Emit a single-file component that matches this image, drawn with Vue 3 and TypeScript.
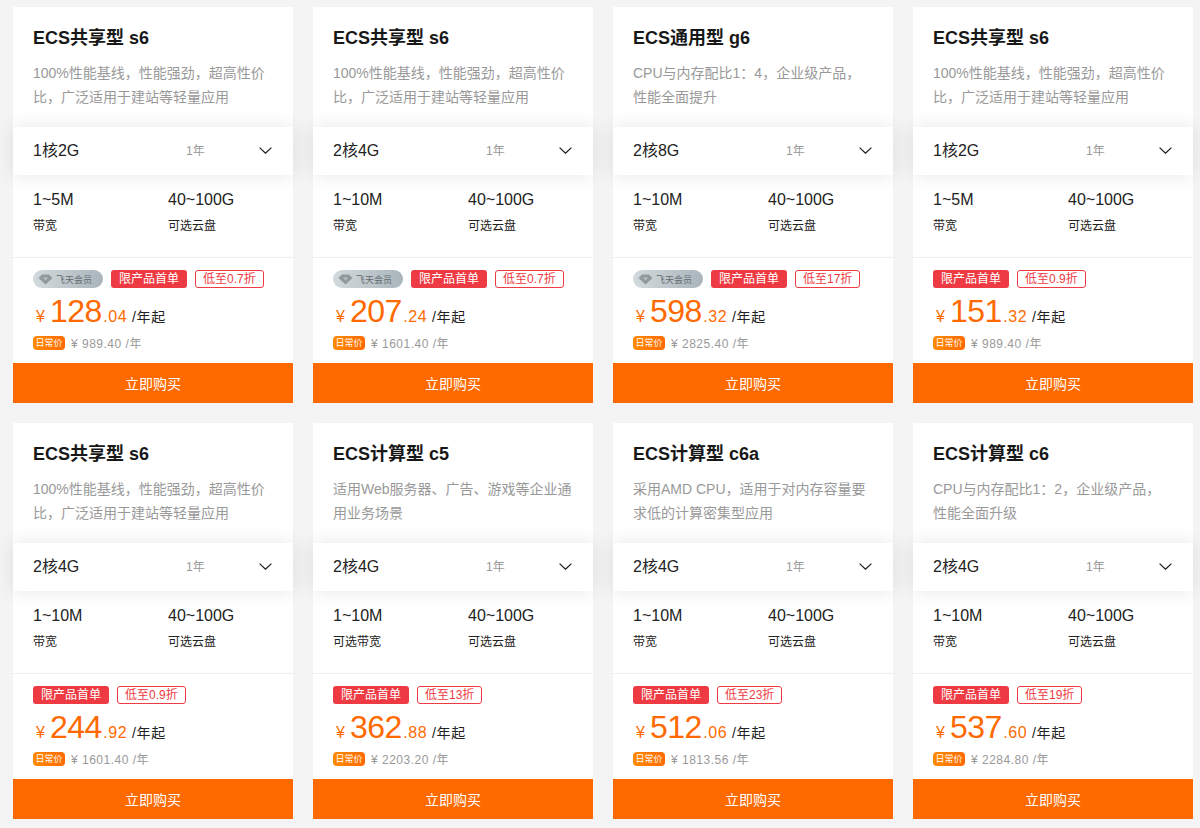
<script setup lang="ts">
interface Product {
  name: string;
  desc: string;
  spec: string;
  band: string;
  bandLabel: string;
  member: boolean;
  discount: string;
  price: string;
  cents: string;
  regular: string;
}

const s6Desc = '100%性能基线，性能强劲，超高性价比，广泛适用于建站等轻量应用';

const products: Product[] = [
  { name: 'ECS共享型 s6', desc: s6Desc, spec: '1核2G', band: '1~5M', bandLabel: '带宽', member: true, discount: '低至0.7折', price: '128', cents: '.04', regular: '989.40' },
  { name: 'ECS共享型 s6', desc: s6Desc, spec: '2核4G', band: '1~10M', bandLabel: '带宽', member: true, discount: '低至0.7折', price: '207', cents: '.24', regular: '1601.40' },
  { name: 'ECS通用型 g6', desc: 'CPU与内存配比1：4，企业级产品，\n性能全面提升', spec: '2核8G', band: '1~10M', bandLabel: '带宽', member: true, discount: '低至17折', price: '598', cents: '.32', regular: '2825.40' },
  { name: 'ECS共享型 s6', desc: s6Desc, spec: '1核2G', band: '1~5M', bandLabel: '带宽', member: false, discount: '低至0.9折', price: '151', cents: '.32', regular: '989.40' },
  { name: 'ECS共享型 s6', desc: s6Desc, spec: '2核4G', band: '1~10M', bandLabel: '带宽', member: false, discount: '低至0.9折', price: '244', cents: '.92', regular: '1601.40' },
  { name: 'ECS计算型 c5', desc: '适用Web服务器、广告、游戏等企业通用业务场景', spec: '2核4G', band: '1~10M', bandLabel: '可选带宽', member: false, discount: '低至13折', price: '362', cents: '.88', regular: '2203.20' },
  { name: 'ECS计算型 c6a', desc: '采用AMD CPU，适用于对内存容量要求低的计算密集型应用', spec: '2核4G', band: '1~10M', bandLabel: '带宽', member: false, discount: '低至23折', price: '512', cents: '.06', regular: '1813.56' },
  { name: 'ECS计算型 c6', desc: 'CPU与内存配比1：2，企业级产品，\n性能全面升级', spec: '2核4G', band: '1~10M', bandLabel: '带宽', member: false, discount: '低至19折', price: '537', cents: '.60', regular: '2284.80' }
];
</script>

<template>
  <div class="page">
    <div v-for="(item, i) in products" :key="i" class="card">
      <div class="intro">
        <h3 class="name">{{ item.name }}</h3>
        <p class="desc">{{ item.desc }}</p>
      </div>

      <div class="select">
        <span class="spec">{{ item.spec }}</span>
        <span class="term">1年</span>
        <svg class="arrow" width="13" height="7" viewBox="0 0 13 7">
          <path d="M.6.6l5.9 5.6L12.4.6" fill="none" stroke="#222" stroke-width="1.3" />
        </svg>
      </div>

      <div class="specs">
        <div class="spec-col band">
          <div class="spec-value">{{ item.band }}</div>
          <div class="spec-label">{{ item.bandLabel }}</div>
        </div>
        <div class="spec-col">
          <div class="spec-value">40~100G</div>
          <div class="spec-label">可选云盘</div>
        </div>
      </div>

      <div class="pricing">
        <div class="tags">
          <span v-if="item.member" class="tag-member">
            <svg width="15" height="11" viewBox="0 0 15 11">
              <path d="M4 .5h7L14.5 4 7.5 10.5.5 4z" fill="#8f9a9f" />
              <path d="M5 3.5h5L7.5 6.5z" fill="#b9c2c6" />
            </svg>
            <span>飞天会员</span>
          </span>
          <span class="tag-first">限产品首单</span>
          <span class="tag-discount">{{ item.discount }}</span>
        </div>
        <div class="price">
          <span class="yen">¥</span>
          <span class="amount">{{ item.price }}</span>
          <span class="cents">{{ item.cents }}</span>
          <span class="unit">/年起</span>
        </div>
        <div class="regular">
          <span class="tag-regular">日常价</span>
          <span class="regular-price">¥ {{ item.regular }} /年</span>
        </div>
      </div>

      <button type="button" class="buy">立即购买</button>
    </div>
  </div>
</template>

<style scoped>
.page {
  display: grid;
  grid-template-columns: repeat(4, 280px);
  gap: 20px;
  padding: 7px 7px 5px 13px;
  width: 1200px;
  box-sizing: border-box;
  font-family: "Liberation Sans", "Noto Sans CJK SC", sans-serif;
}

.card {
  display: flex;
  flex-direction: column;
  height: 396px;
  background: #fff;
}

.intro {
  height: 120px;
  padding: 20px 20px 0;
  box-sizing: border-box;
}

.name {
  margin: 0;
  font-size: 18px;
  line-height: 22px;
  font-weight: 700;
  color: #181818;
}

.desc {
  margin: 12px 0 0;
  font-size: 14px;
  line-height: 24px;
  color: #999;
  white-space: pre-line;
}

.select {
  display: flex;
  align-items: center;
  height: 48px;
  padding: 0 20px;
  background: #fff;
  box-shadow: 0 0 20px rgba(0, 0, 0, 0.1);
  position: relative;
}

.spec {
  width: 152px;
  font-size: 16px;
  line-height: 48px;
  height: 48px;
  color: #222;
}

.term {
  font-size: 12px;
  line-height: 48px;
  height: 48px;
  margin-left: 1px;
  color: #999;
}

.arrow {
  margin-left: auto;
  margin-right: 1px;
  margin-bottom: 2px;
}

.specs {
  display: flex;
  height: 83px;
  padding: 15px 20px 0;
  box-sizing: border-box;
  border-bottom: 1px solid #eee;
}

.spec-col {
  flex: 1;
}

.band {
  flex: 0 0 135px;
}

.spec-value {
  font-size: 16px;
  line-height: 20px;
  color: #222;
}

.spec-label {
  margin-top: 7px;
  font-size: 12px;
  line-height: 18px;
  color: #222;
}

.pricing {
  flex: 1;
  padding: 12px 20px 0;
}

.tags {
  display: flex;
  align-items: center;
  gap: 8px;
  height: 18px;
}

.tag-member {
  display: flex;
  align-items: center;
  gap: 3px;
  width: 70px;
  height: 18px;
  padding-left: 5px;
  box-sizing: border-box;
  border-radius: 9px;
  background: linear-gradient(90deg, #d3dadd, #a9b5bb);
  font-size: 9px;
  color: #62696e;
}

.tag-first {
  width: 76px;
  height: 18px;
  line-height: 19px;
  text-align: center;
  border-radius: 3px;
  background: #ee3a42;
  font-size: 12px;
  color: #fff;
}

.tag-discount {
  height: 18px;
  line-height: 17px;
  padding: 0 7px;
  box-sizing: border-box;
  border: 1px solid #ee3a42;
  border-radius: 3px;
  font-size: 12px;
  color: #ee3a42;
}

.price {
  display: flex;
  align-items: baseline;
  height: 36px;
  margin-top: 5px;
  color: #ff6a00;
}

.yen {
  margin-left: 3px;
  margin-right: 5px;
  font-size: 16px;
}

.amount {
  font-size: 32px;
  line-height: 36px;
  letter-spacing: -0.5px;
}

.cents {
  margin-left: 1.5px;
  font-size: 16px;
  letter-spacing: 0.5px;
}

.unit {
  margin-left: 5px;
  font-size: 14px;
  letter-spacing: 0.6px;
  color: #222;
}

.regular {
  display: flex;
  align-items: center;
  gap: 6px;
  margin-top: 7px;
  height: 14px;
}

.tag-regular {
  width: 32px;
  height: 14px;
  line-height: 14px;
  text-align: center;
  border-radius: 4px;
  background: linear-gradient(90deg, #ff8a00, #ff6a00);
  font-size: 9px;
  color: #fff;
}

.regular-price {
  margin-bottom: 2px;
  font-size: 12px;
  letter-spacing: 0.5px;
  color: #999;
}

.buy {
  display: block;
  width: 100%;
  height: 40px;
  padding: 0;
  border: none;
  background: #ff6a00;
  font-family: inherit;
  font-size: 14px;
  color: #fff;
  cursor: pointer;
}
</style>

<style>
body {
  background: #f4f4f4;
}
</style>
